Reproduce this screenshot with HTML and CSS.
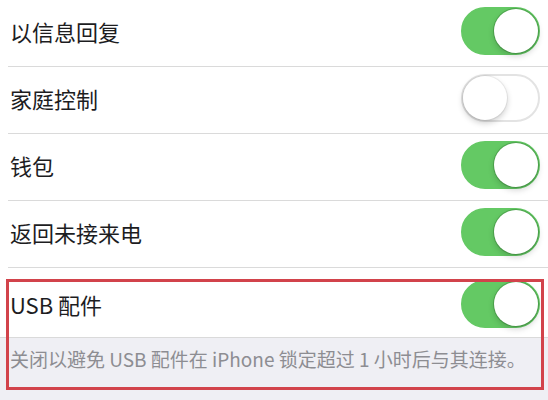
FILE: index.html
```html
<!DOCTYPE html>
<html lang="zh-CN">
<head>
  <meta charset="UTF-8" />
  <meta name="viewport" content="width=device-width, initial-scale=1.0"/>
  <title>设置</title>
  <link rel="stylesheet" href="styles.css">
</head>
<body>
  <div class="settings">
    <ul class="group">
      <li class="row">
        <span class="label">以信息回复</span>
        <span class="switch on"><span class="knob"></span></span>
      </li>
      <li class="row">
        <span class="label">家庭控制</span>
        <span class="switch"><span class="knob"></span></span>
      </li>
      <li class="row">
        <span class="label">钱包</span>
        <span class="switch on"><span class="knob"></span></span>
      </li>
      <li class="row">
        <span class="label">返回未接来电</span>
        <span class="switch on"><span class="knob"></span></span>
      </li>
      <li class="row last">
        <span class="label">USB 配件</span>
        <span class="switch on"><span class="knob"></span></span>
      </li>
    </ul>
    <p class="footer">关闭以避免 USB 配件在 iPhone 锁定超过 1 小时后与其连接。</p>
    <div class="highlight"></div>
  </div>
</body>
</html>
```

FILE: styles.css
```css
* {
  box-sizing: border-box;
  margin: 0;
  padding: 0;
}

body {
  background: #efeff4;
  font-family: "Noto Sans CJK SC", "Noto Sans", sans-serif;
  color: #1d1d1f;
}

.settings {
  position: relative;
  width: 548px;
  height: 400px;
  overflow: hidden;
}

.group {
  list-style: none;
  background: #fff;
  padding-left: 8px;
}

.row {
  display: flex;
  align-items: center;
  justify-content: space-between;
  height: 67px;
  padding: 0 8px 4px 2px;
  border-bottom: 1px solid #dadada;
}

.row.last {
  height: 70px;
  margin-left: -8px;
  padding-left: 10px;
  padding-top: 4px;
  padding-bottom: 2px;
}

.label {
  font-size: 22px;
  line-height: 1;
}

.switch {
  position: relative;
  width: 79px;
  height: 48px;
  border-radius: 24px;
  background: #fff;
  border: 2px solid #e3e3e3;
}

.switch .knob {
  position: absolute;
  top: 0;
  left: 0;
  width: 44px;
  height: 44px;
  border-radius: 50%;
  background: #fff;
  box-shadow: 0 3px 6px rgba(0, 0, 0, 0.2), 0 0 0 1px rgba(0, 0, 0, 0.06);
}

.switch.on {
  background: #64c964;
  border-color: #64c964;
}

.switch.on .knob {
  left: auto;
  right: 0;
  box-shadow: 0 3px 6px rgba(0, 0, 0, 0.18), 0 0 0 1px rgba(60, 140, 60, 0.5);
}

.footer {
  padding: 8px 10px 0;
  font-size: 19px;
  line-height: 26px;
  color: #8d8d92;
  white-space: nowrap;
}

.highlight {
  position: absolute;
  left: 6px;
  top: 279px;
  width: 538px;
  height: 111px;
  border: 3px solid #d2434b;
}
```
